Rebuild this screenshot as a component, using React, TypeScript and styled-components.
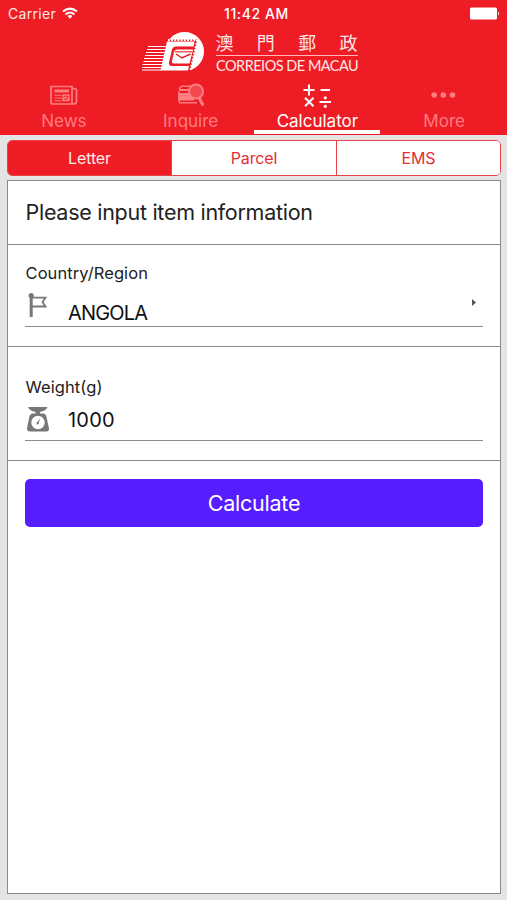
import React from 'react';
import styled, { createGlobalStyle } from 'styled-components';

const Global = createGlobalStyle`
  * { box-sizing: border-box; }
  body { margin: 0; background: #e4e4e4; font-family: Inter, "Liberation Sans", sans-serif; color: #222; }
`;
const Screen = styled.main`
  width: 507px; height: 900px; display: flex; flex-direction: column; overflow: hidden; background: #e4e4e4;
`;
const Header = styled.header`
  height: 135px; flex: none; background: #ee1c25; color: #fff; display: flex; flex-direction: column;
`;
const Status = styled.div`
  height: 28px; padding: 0 7px 0 8px; display: grid; grid-template-columns: 1fr auto 1fr; align-items: center;
  font-size: 14px; line-height: 28px; white-space: nowrap;
`;
const Carrier = styled.div`display: flex; align-items: center; gap: 6px; letter-spacing: 0.3px; color: #ffe6e6;
  svg { margin-bottom: 2px; }
`;
const Clock = styled.div`font-weight: 500; font-size: 14px; letter-spacing: 0.6px; padding-left: 5px;`;
const Battery = styled.svg`justify-self: end; margin-bottom: 1px;`;
const Brand = styled.div`height: 51px; display: flex; padding-left: 140px;`;
const BrandText = styled.div`width: 142px; margin: 5px 0 0 5.5px;`;
const ChineseName = styled.div`
  display: flex; justify-content: space-between; height: 23px; line-height: 18px; font-size: 18px; font-weight: 400;
  font-family: "Noto Sans CJK TC", sans-serif; border-bottom: 1px solid #ffb9ba; color: #ffe6e6;
`;
const LatinName = styled.div`
  font-family: Lato, sans-serif; font-size: 16px; line-height: 18px; letter-spacing: -0.55px; white-space: nowrap;
  transform: scaleX(0.905); transform-origin: left; color: #ffe6e6;
`;
const Nav = styled.nav`display: grid; grid-template-columns: repeat(4, 1fr); height: 56px;`;
const NavItem = styled.a<{ $active?: boolean }>`
  display: flex; flex-direction: column; align-items: center; height: 55px; padding: 3px 0 0 1px;
  font-size: 17px; line-height: 24px;
  color: ${p => (p.$active ? '#fff' : '#ff7c80')};
  border-bottom: 4px solid ${p => (p.$active ? '#fff' : 'transparent')};
  svg { flex: none; }
`;
const Segments = styled.div`
  flex: none; margin: 5px 6px 4px 7px; height: 36px; display: grid; grid-template-columns: 164px 165px 1fr;
  border: 1px solid #e9434a; border-radius: 5px; overflow: hidden; background: #fff;
`;
const Segment = styled.button<{ $active?: boolean }>`
  border: 0; border-right: 1px solid #e9434a; padding: 0; font: 400 16px/34px Inter, sans-serif;
  letter-spacing: -0.1px;
  background: ${p => (p.$active ? '#ee1c25' : '#fff')}; color: ${p => (p.$active ? '#ffe9e9' : '#e52e36')};
  &:last-child { border-right: 0; }
`;
const Panel = styled.section`
  flex: none; height: 714px; margin: 0 6px 0 7px; background: #fff; border: 1px solid #8b8b8b;
`;
const Heading = styled.h1`
  margin: 0; height: 64px; padding-left: 17.5px; font-size: 21.5px; line-height: 62px; font-weight: 400;
  letter-spacing: -0.28px; border-bottom: 1px solid #8b8b8b; white-space: nowrap;
`;
const Field = styled.div<{ $height: number; $top: number }>`
  height: ${p => p.$height}px; padding: ${p => p.$top}px 17px 0; border-bottom: 1px solid #8b8b8b;
`;
const Label = styled.label`display: block; padding-left: 0.5px; font-size: 16.5px; line-height: 22px; letter-spacing: 0.08px;`;
const Control = styled.div`
  height: 43px; display: flex; align-items: flex-start; border-bottom: 1px solid #8b8b8b;
`;
const Value = styled.span<{ $top: number; $spacing: number }>`
  margin: ${p => p.$top}px auto 0 17px; font-size: 20px; line-height: 24px; color: #111; letter-spacing: ${p => p.$spacing}px;
`;
const Arrow = styled.svg`margin: 15px 7px 0 0;`;
const Submit = styled.button`
  display: block; width: 458px; height: 48px; margin: 18px 0 0 17px; padding: 0; border: 0; border-radius: 5px;
  background: #561eff; color: #fff; font: 400 21.5px/48px Inter, sans-serif; letter-spacing: -0.25px;
`;

const Wifi = () => (
  <svg width="16" height="13" viewBox="0 0 16 13" fill="none" stroke="#fff" strokeWidth="2">
    <path d="M1 4.6Q8-1.4 15 4.6M3.5 7.5Q8 3.6 12.5 7.5" /><path d="M5.5 9Q8 7 10.5 9L8 11.7Z" fill="#fff" stroke="none" />
  </svg>
);
const PostLogo = () => (
  <svg width="70" height="48" viewBox="0 0 70 48" fill="none">
    <circle cx="44.5" cy="23.5" r="19.5" fill="#fff" />
    <path d="M27 11.5H57.5L50 44H20Z" fill="#ee1c25" />
    <path d="M28 12H57" stroke="#fff" strokeWidth="2" strokeDasharray="1.8 1.4" />
    <path d="M57.5 12L50.5 43" stroke="#fff" strokeWidth="2.4" strokeDasharray="1.8 1.4" />
    <path d="M27 13.5H54.5L53.5 18.5H36Q33 18.5 32 21.5L29 34.5Q28.5 38 32 38H49L48 42.5H20.5Z" fill="#fff" />
    <path d="M37 21.5H53L49.5 35.5H34Q31.5 35.5 32 33L34 24Q34.6 21.5 37 21.5Z" fill="#fff" />
    <path d="M35 23.8H52" stroke="#ee1c25" strokeWidth="1.1" />
    <path d="M36 26L42 30L50.5 26" stroke="#ee1c25" strokeWidth="1.5" />
    <path d="M8 18.5H25.5M7 21.5H25M6 24.5H24.5M5 27.5H24M4 30.5H23.5M3.5 33.5H23M2.5 36.5H22M2 39.5H22M2 42H21" stroke="#fff" strokeWidth="1" />
  </svg>
);
const NewsIcon = () => (
  <svg width="28" height="27" viewBox="0 0 28 27" fill="none" stroke="currentColor" strokeWidth="1.7">
    <path d="M2 4.5H22V21Q22 22 23 22H3Q1 22 1 20V4.5H3M22 6.5H24Q26.5 6.5 26.5 9V19.5Q26.5 22 23 22" />
    <path d="M4.5 9H19" strokeWidth="3" /><path d="M4.5 13.2H11.5M4.5 16H11.5M4.5 18.8H11.5" strokeWidth="1.1" /><path d="M13 13H19V18.5H13ZM13 18L15.5 15L19 18" strokeWidth="1.3" />
  </svg>
);
const InquireIcon = () => (
  <svg width="28" height="27" viewBox="0 0 28 27" fill="none" stroke="currentColor">
    <path d="M4 4.3H15M2 8L4 4.3M2 20.8H20M2 20V9" strokeWidth="1.6" />
    <path d="M3 7H13V9H3ZM1 11H14L17 17V18.5H1Z" fill="currentColor" stroke="none" />
    <circle cx="19" cy="9.5" r="7" fill="#f4474e" strokeWidth="2" /><path d="M22.5 16.5L25.5 22.3" strokeWidth="3.2" strokeLinecap="round" />
  </svg>
);
const CalculatorIcon = () => (
  <svg width="28" height="27" viewBox="0 0 28 27" stroke="currentColor" strokeWidth="2" fill="currentColor">
    <path d="M.5 8H11.5M6 2.5V13.5M17.5 8H27M2 15.8L10.5 24.2M10.5 15.8L2 24.2M16.5 20H28" /><circle cx="22.3" cy="15.8" r="1.6" stroke="none" /><circle cx="22.3" cy="24.3" r="1.6" stroke="none" />
  </svg>
);
const MoreIcon = () => (
  <svg width="28" height="27" viewBox="0 0 28 27" fill="currentColor"><circle cx="4.2" cy="13" r="2.8" /><circle cx="13.3" cy="13" r="2.8" /><circle cx="22.5" cy="13" r="2.8" /></svg>
);
const FlagIcon = () => (
  <svg width="26" height="36" viewBox="0 -4 26 36" fill="none" stroke="#777" strokeWidth="1.8"><path d="M6.2 6V29" strokeWidth="3" /><circle cx="6.2" cy="7.5" r="2.6" fill="#777" stroke="none" /><path d="M6.5 9.7H20.5L17.5 14L20.5 18.5H6.5" /></svg>
);
const ScaleIcon = () => (
  <svg width="26" height="35" viewBox="-0.5 -7 26 35" fill="#777"><path d="M2.5 2H22Q20.5 6 14.5 7V8.5H18Q20 8.5 20.8 11L23.5 23.5Q23.7 26.5 21 26.5H4Q1.5 26.5 1.5 23.5L4 11Q4.8 8.5 7 8.5H10V7Q4 6 2.5 2Z" /><circle cx="12.5" cy="17.5" r="6.7" fill="#fff" /><path d="M11.5 19.5L14 14.5" stroke="#777" /><circle cx="12.2" cy="18" r="1.2" /></svg>
);

export default function App() {
  return (
    <>
      <Global />
      <Screen>
        <Header>
          <Status>
            <Carrier>Carrier <Wifi /></Carrier>
            <Clock>11:42 AM</Clock>
            <Battery width="31" height="13" viewBox="0 0 31 13" fill="#fff"><rect x="1" width="27" height="12" rx="1.5" y=".5" /><path d="M29 4.5Q31 6.5 29 8.5Z" /></Battery>
          </Status>
          <Brand>
            <PostLogo />
            <BrandText>
              <ChineseName><span>澳</span><span>門</span><span>郵</span><span>政</span></ChineseName>
              <LatinName>CORREIOS DE MACAU</LatinName>
            </BrandText>
          </Brand>
          <Nav>
            <NavItem><NewsIcon />News</NavItem>
            <NavItem><InquireIcon />Inquire</NavItem>
            <NavItem $active><CalculatorIcon />Calculator</NavItem>
            <NavItem><MoreIcon />More</NavItem>
          </Nav>
        </Header>
        <Segments>
          <Segment $active>Letter</Segment><Segment>Parcel</Segment><Segment>EMS</Segment>
        </Segments>
        <Panel>
          <Heading>Please input item information</Heading>
          <Field $height={102} $top={17}>
            <Label>Country/Region</Label>
            <Control>
              <FlagIcon /><Value $top={17} $spacing={-0.85}>ANGOLA</Value>
              <Arrow width="4" height="7" viewBox="0 0 4 7" fill="#555"><path d="M0 0L4 3.5L0 7Z" /></Arrow>
            </Control>
          </Field>
          <Field $height={114} $top={29}>
            <Label>Weight(g)</Label>
            <Control><ScaleIcon /><Value $top={10} $spacing={0.2}>1000</Value></Control>
          </Field>
          <Submit>Calculate</Submit>
        </Panel>
      </Screen>
    </>
  );
}
